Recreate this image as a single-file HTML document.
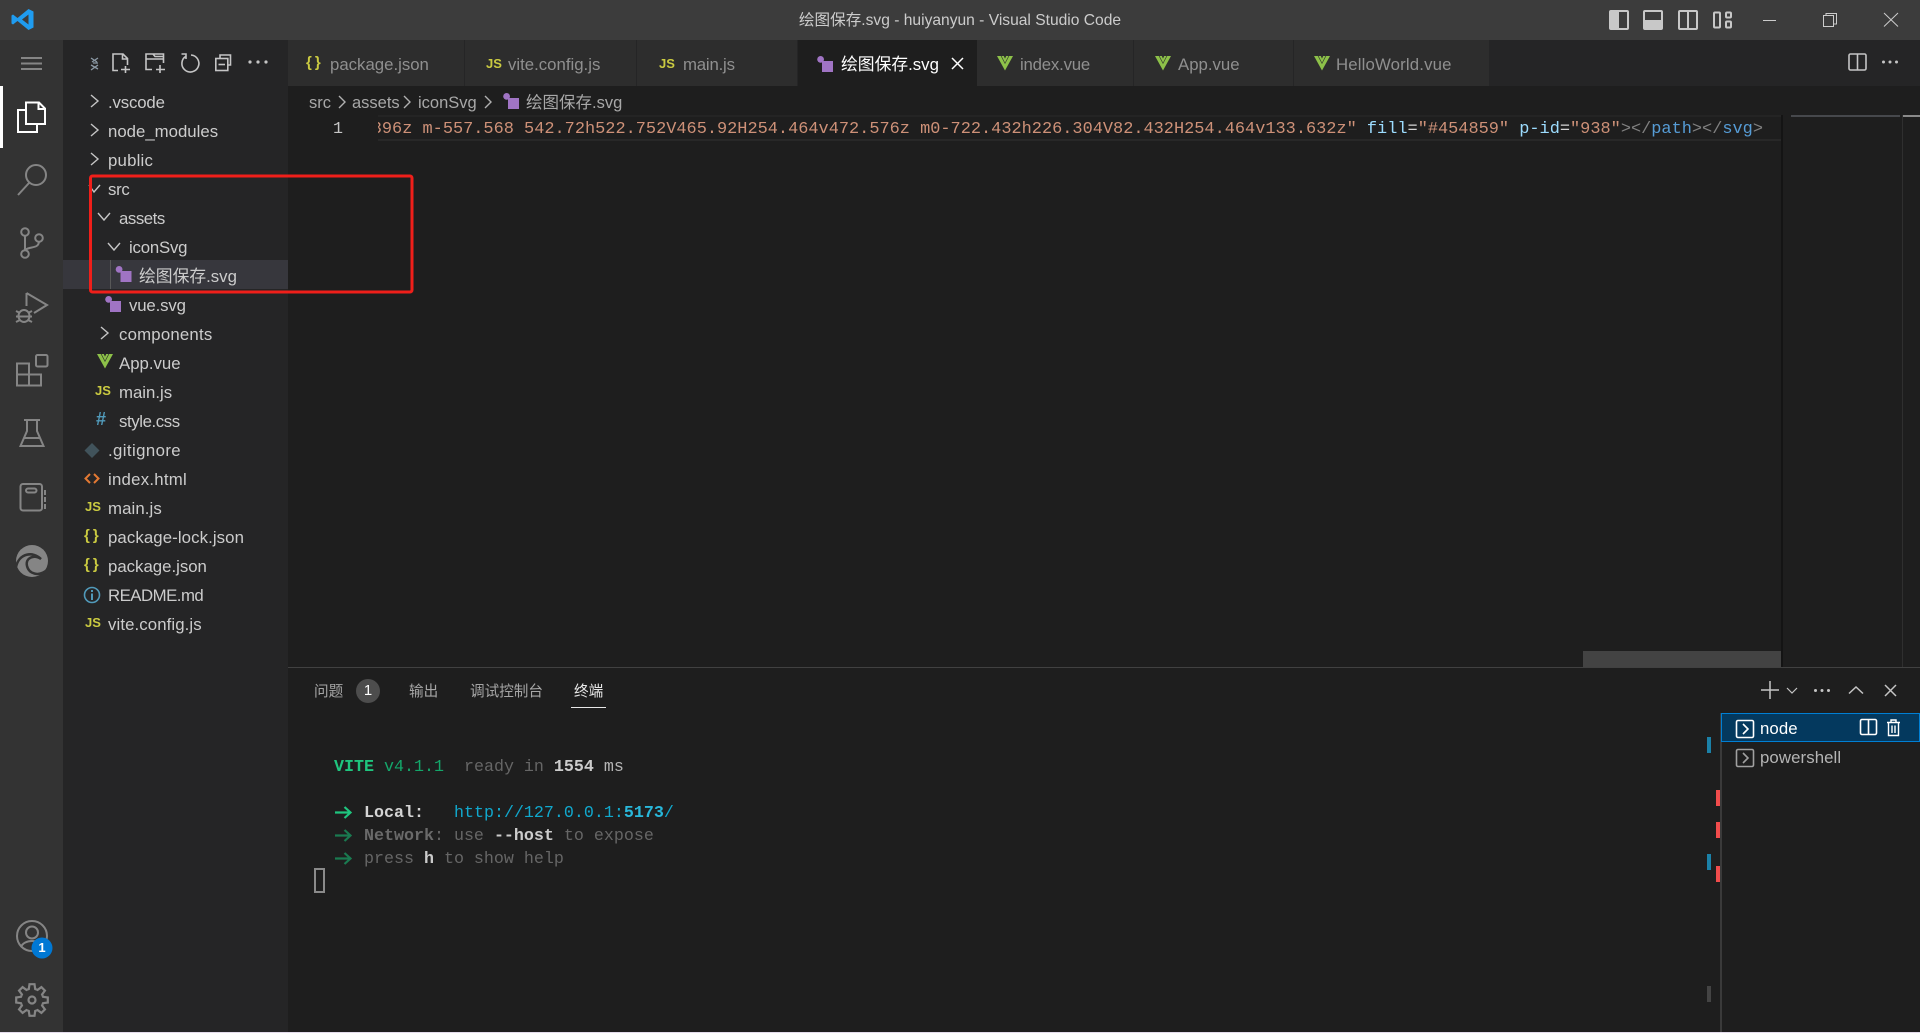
<!DOCTYPE html>
<html lang="zh"><head><meta charset="utf-8"><title>绘图保存.svg - huiyanyun - Visual Studio Code</title>
<style>
html,body{margin:0;padding:0;background:#1e1e1e}
#a{position:relative;width:1920px;height:1033px;overflow:hidden;background:#1e1e1e;font-family:"Liberation Sans","Noto Sans CJK SC",sans-serif;color:#ccc}
#a div,#a span.t{position:absolute;white-space:nowrap}
.b{position:absolute}
.r{font-size:16.8px;line-height:29px;height:29px;color:#ccc}
.tb{top:40px;height:46px;background:#2d2d2d;border-right:1px solid #252526;box-sizing:border-box}
.tt{top:51px;font-size:16.8px;line-height:28px;color:#8f8f8f}
.bc{top:89px;font-size:16.5px;line-height:28px;color:#a8a8a8}
.ic{font-weight:bold;color:#cbcb41;font-size:13px;line-height:16px;font-family:"Liberation Sans",sans-serif}
.br{font-size:15px;letter-spacing:3px;line-height:18px}
.pt{top:681.5px;font-size:14.6px;line-height:21px;color:#a6a6a6}
.mono{font-family:"Liberation Mono","Noto Sans CJK SC",monospace;font-size:16.67px}
pre{margin:0;font-family:inherit;font-size:inherit}
b{font-weight:bold}
</style></head><body><div id="a">
<div style="left:0;top:0;width:1920px;height:40px;background:#3c3c3c"></div>
<div style="left:0;top:40px;width:63px;height:993px;background:#333"></div>
<div style="left:63px;top:40px;width:225px;height:993px;background:#252526"></div>
<div style="left:288px;top:40px;width:1632px;height:46px;background:#252526"></div>

<div style="left:798px;top:10px;font-size:15.6px;line-height:22px;color:#ccc;width:324px;text-align:center">绘图保存.svg - huiyanyun - Visual Studio Code</div>

<!-- tabs -->
<div class="tb" style="left:288px;width:177px"></div>
<div class="tb" style="left:465px;width:172px"></div>
<div class="tb" style="left:637px;width:161px"></div>
<div class="tb" style="left:798px;width:179px;background:#1e1e1e;border:0"></div>
<div class="tb" style="left:977px;width:157px"></div>
<div class="tb" style="left:1134px;width:160px"></div>
<div class="tb" style="left:1294px;width:195px;border-right:0"></div>
<div class="ic br" style="left:306px;top:54px">{}</div>
<div class="tt" style="left:330px">package.json</div>
<div class="ic" style="left:486px;top:56px">JS</div>
<div class="tt" style="left:508px">vite.config.js</div>
<div class="ic" style="left:659px;top:56px">JS</div>
<div class="tt" style="left:683px;letter-spacing:-.2px">main.js</div>
<div class="tt" style="left:841px;color:#fff">绘图保存.svg</div>
<div class="tt" style="left:1020px;letter-spacing:-.2px">index.vue</div>
<div class="tt" style="left:1178px">App.vue</div>
<div class="tt" style="left:1336px;letter-spacing:.15px">HelloWorld.vue</div>

<!-- explorer rows -->
<div style="left:63px;top:260px;width:225px;height:29px;background:#37373d"></div>
<div style="left:110px;top:260px;width:1px;height:29px;background:#585858"></div>
<div class="r" style="left:108px;top:88px;letter-spacing:-.15px">.vscode</div>
<div class="r" style="left:108px;top:117px">node_modules</div>
<div class="r" style="left:108px;top:146px;letter-spacing:.2px">public</div>
<div class="r" style="left:108px;top:175px;letter-spacing:-.3px">src</div>
<div class="r" style="left:119px;top:204px;letter-spacing:-.45px">assets</div>
<div class="r" style="left:129px;top:233px;letter-spacing:-.2px">iconSvg</div>
<div class="r" style="left:139px;top:262px">绘图保存.svg</div>
<div class="r" style="left:129px;top:291px;letter-spacing:-.15px">vue.svg</div>
<div class="r" style="left:119px;top:320px;letter-spacing:.2px">components</div>
<div class="r" style="left:119px;top:349px">App.vue</div>
<div class="r" style="left:119px;top:378px">main.js</div>
<div class="r" style="left:119px;top:407px;letter-spacing:-.4px">style.css</div>
<div class="r" style="left:108px;top:436px;letter-spacing:.4px">.gitignore</div>
<div class="r" style="left:108px;top:465px;letter-spacing:.25px">index.html</div>
<div class="r" style="left:108px;top:494px;letter-spacing:.1px">main.js</div>
<div class="r" style="left:108px;top:523px;letter-spacing:.1px">package-lock.json</div>
<div class="r" style="left:108px;top:552px">package.json</div>
<div class="r" style="left:108px;top:581px;letter-spacing:-.5px">README.md</div>
<div class="r" style="left:108px;top:610px;letter-spacing:.1px">vite.config.js</div>
<div class="ic" style="left:95px;top:383px">JS</div>
<div class="ic" style="left:96px;top:411px;color:#519aba;font-size:18px">#</div>
<div class="ic" style="left:85px;top:499px">JS</div>
<div class="ic" style="left:85px;top:615px">JS</div>
<div class="ic br" style="left:84px;top:527px">{}</div>
<div class="ic br" style="left:84px;top:556px">{}</div>

<!-- breadcrumbs -->
<div class="bc" style="left:309px">src</div>
<div class="bc" style="left:352px">assets</div>
<div class="bc" style="left:418px">iconSvg</div>
<div class="bc" style="left:526px">绘图保存.svg</div>

<!-- editor -->
<div style="left:378px;top:115px;width:1405px;height:22px;border-top:2px solid #242424;border-bottom:2px solid #282828"></div>
<div class="mono" style="left:333px;top:119px;line-height:22px;height:22px;color:#c6c6c6">1</div>
<div class="mono" style="left:378px;top:119px;width:1385px;height:22px;overflow:hidden;font-size:16.93px"><span class="t" style="right:0;top:0;line-height:22px"><span style="color:#ce9178">396z m-557.568 542.72h522.752V465.92H254.464v472.576z m0-722.432h226.304V82.432H254.464v133.632z"</span> <span style="color:#9cdcfe">fill</span><span style="color:#d4d4d4">=</span><span style="color:#ce9178">"#454859"</span> <span style="color:#9cdcfe">p-id</span><span style="color:#d4d4d4">=</span><span style="color:#ce9178">"938"</span><span style="color:#808080">&gt;&lt;/</span><span style="color:#569cd6">path</span><span style="color:#808080">&gt;&lt;/</span><span style="color:#569cd6">svg</span><span style="color:#808080">&gt;</span></span></div>
<div style="left:1781px;top:115px;width:2px;height:552px;background:#141414"></div>
<div style="left:1902px;top:115px;width:1px;height:552px;background:#2f2f2f"></div>
<div style="left:1791px;top:115px;width:109px;height:2px;background:#46484c"></div>
<div style="left:1903px;top:115px;width:17px;height:2px;background:#8a8a8a"></div>
<div style="left:1583px;top:651px;width:198px;height:16px;background:#434343"></div>

<!-- panel -->
<div style="left:288px;top:667px;width:1632px;height:1px;background:#414141"></div>
<div class="pt" style="left:314px">问题</div>
<div style="left:356px;top:679px;width:24px;height:24px;border-radius:12px;background:#4d4d4d;color:#fff;font-size:15px;line-height:24px;text-align:center">1</div>
<div class="pt" style="left:409px">输出</div>
<div class="pt" style="left:470px">调试控制台</div>
<div class="pt" style="left:574px;color:#e7e7e7">终端</div>
<div style="left:571px;top:707px;width:35px;height:1px;background:#e7e7e7"></div>

<div class="mono" style="left:314px;top:756px;line-height:23px;color:#666"><pre>  <b style="color:#1fc57e">VITE</b> <span style="color:#14a66a">v4.1.1</span>  ready in <b style="color:#ccc">1554</b> <span style="color:#b5b5b5">ms</span>

     <b style="color:#d4d4d4">Local</b><b style="color:#d4d4d4">:</b>   <span style="color:#11a8cd">http://127.0.0.1:</span><b style="color:#29b8db">5173</b><span style="color:#11a8cd">/</span>
     <b style="color:#6a6a6a">Network</b>: use <b style="color:#ccc">--host</b> to expose
     press <b style="color:#ccc">h</b> to show help</pre></div>
<div style="left:314px;top:868px;width:7px;height:21px;border:2px solid #8a8a8a"></div>

<div style="left:1707px;top:737px;width:4px;height:16px;background:#1b81a8"></div>
<div style="left:1707px;top:854px;width:4px;height:16px;background:#1b81a8"></div>
<div style="left:1707px;top:986px;width:4px;height:16px;background:#444"></div>
<div style="left:1716px;top:790px;width:4px;height:16px;background:#f14c4c"></div>
<div style="left:1716px;top:822px;width:4px;height:16px;background:#f14c4c"></div>
<div style="left:1716px;top:866px;width:4px;height:16px;background:#f14c4c"></div>
<div style="left:1720px;top:713px;width:2px;height:320px;background:#3a3a3a"></div>
<div style="left:1721px;top:713px;width:199px;height:29px;box-sizing:border-box;background:#04395e;border:1px solid #007fd4"></div>
<div class="r" style="left:1760px;top:714px;color:#fff;letter-spacing:.1px">node</div>
<div class="r" style="left:1760px;top:743px;color:#b4b4b4;letter-spacing:.1px">powershell</div>

<!-- icons -->
<svg class="b" style="left:0;top:0" width="1920" height="1033" viewBox="0 0 1920 1033" fill="none" stroke-linecap="butt">
<defs>
<g id="sv"><circle cx="3.6" cy="3.4" r="3.4" fill="#a074c4"/><rect x="5" y="5" width="11" height="11" fill="#a074c4"/></g>
<g id="vu"><path d="M0 0H3.800L8 8 12.200 0H16L8 14.500Z" fill="#8dc149"/><path d="M4.500 0H6.800L8 2.600 9.200 0H11.500L8 6.800Z" fill="#8dc149"/></g>
<path id="ge" d="M-4.4 -10.6L-3.2 -11L-2.5 -15.8H2.5L3.2 -11L4.4 -10.6"/>
</defs>
<!-- logo -->
<path fill-rule="evenodd" fill="#1f9cf0" d="M28.5 9L33.5 11.5V27.5L28.5 30L17.5 21L13 24.5L11.5 23.5V15.5L13 14.5L17.5 18ZM28.5 14.5L22 19.5L28.5 24.5Z"/>
<!-- title controls -->
<g stroke="#c8c8c8" stroke-width="2"><rect x="1610" y="11" width="18" height="18" rx="1"/><rect x="1644" y="11" width="18" height="18" rx="1"/><rect x="1679" y="11" width="18" height="18" rx="1"/><path d="M1688 11V29"/><rect x="1714" y="12.5" width="6" height="15" rx="1"/><rect x="1726" y="12.5" width="5" height="5" rx="1"/><rect x="1726" y="21.5" width="5" height="6" rx="1"/></g>
<rect x="1611" y="12" width="8" height="16" fill="#c8c8c8"/><rect x="1645" y="20" width="16" height="8" fill="#c8c8c8"/>
<g stroke="#ccc" stroke-width="1"><path d="M1763 20.5H1776"/><rect x="1823.5" y="15.5" width="10" height="11"/><path d="M1826 15V13.5H1836.5V24H1834"/><path d="M1884 13L1898 26.5M1898 13L1884 26.5"/></g>
<!-- activity -->
<g stroke="#858585" stroke-width="2"><path d="M21 58H42M21 63.5H42M21 69H42"/>
<circle cx="36" cy="175" r="10"/><path d="M29 183L18 195"/>
<circle cx="25" cy="232" r="3.8"/><circle cx="25" cy="254" r="3.8"/><circle cx="39" cy="238" r="3.8"/><path d="M25 236V250M39 242C38 249 30 246 25 250"/>
<path d="M26.5 293V306M26.5 293L47 305L34 313"/><ellipse cx="24" cy="316" rx="5.5" ry="6"/><path d="M16 311L20 313M32 311L28 313M16 322L20 320M32 322L28 320M16 316.5H32"/>
<path d="M17 363.5H29V385.5H17ZM17 374.5H41V385.5H29"/><path d="M41 374.5V385.5"/><rect x="36" y="355" width="11.5" height="11.5" rx="1.5"/>
<path d="M24 420H40M27 420V431L20.5 446H43.5L37 431V420M23.5 438H40.5"/>
<rect x="20.5" y="484" width="21.5" height="26.5" rx="2.5"/><rect x="26" y="488.5" width="10.5" height="4" rx="2"/><path d="M45 490V495M45 497V502M45 504V509"/>
<circle cx="32" cy="936" r="15"/><circle cx="32" cy="932.5" r="6"/><path d="M21 947C24 939 40 939 43 947"/>
</g>
<path fill="#fff" d="M0 86H3V148H0Z"/>
<g stroke="#fff" stroke-width="2"><path d="M26 102.5H39L45 108.500V124H26ZM38.500 103V109H45M26 110H18V132H37V124"/></g>
<circle cx="32" cy="561" r="16" fill="#858585"/><path d="M16 567C19 553 33 551 41 559C34 554 25 558 27 566C29 574 39 577 47 570" stroke="#333" stroke-width="2.500"/>
<circle cx="42" cy="948" r="10.500" fill="#0078d4"/>
<g stroke="#858585" stroke-width="2.200" transform="translate(32 1000)"><use href="#ge"/><use href="#ge" transform="rotate(45)"/><use href="#ge" transform="rotate(90)"/><use href="#ge" transform="rotate(135)"/><use href="#ge" transform="rotate(180)"/><use href="#ge" transform="rotate(225)"/><use href="#ge" transform="rotate(270)"/><use href="#ge" transform="rotate(315)"/><circle r="3.500"/></g>
<!-- sidebar toolbar -->
<g stroke="#c5c5c5" stroke-width="1.600">
<path stroke="#8c9aa6" stroke-width="1.300" d="M91 58L97 62M98 58L92 62M93 63H98M91 65L98 69M98 65L91 70"/>
<path d="M118 70.500H113V54H123L127.500 58.500V65M122.500 54V59H127.500M125.500 66V73M121 69.500H130"/>
<path d="M152 69.500H146V54H163.500V63M146 59H163.500M153 54L155 56.500H163.500M160 65V73M156 69.500H165"/>
<path d="M186 56.200A8.500 8.500 0 1 0 191 55M181.500 54H186V59"/>
<path d="M220 58V55H230.500V65H228"/><rect x="215.800" y="58.500" width="12" height="12"/><path d="M218.500 64.500H225"/>
</g>
<g fill="#c5c5c5"><circle cx="250" cy="62" r="1.600"/><circle cx="258" cy="62" r="1.600"/><circle cx="266" cy="62" r="1.600"/><circle cx="1890" cy="62" r="1.500"/><circle cx="1896.500" cy="62" r="1.500"/><circle cx="1883.500" cy="62" r="1.500"/></g>
<!-- chevrons -->
<g stroke="#c5c5c5" stroke-width="1.400">
<path d="M91 95L98 101L91 107M91 124L98 130L91 136M91 153L98 159L91 165M89 185L94 192L100 185M98 213L104 220L110 213M108 243L114 250L120 243M101 327L108 333L101 339"/>
<path stroke="#b0b0b0" d="M339 96L345 102L339 108M404 96L410 102L404 108M485 96L491 102L485 108"/>
</g>
<!-- file icons -->
<use href="#sv" x="115.500" y="266"/><use href="#sv" x="105" y="296"/><use href="#sv" x="503" y="93"/><use href="#sv" x="817" y="56"/>
<use href="#vu" x="97" y="354"/><use href="#vu" x="997" y="56"/><use href="#vu" x="1155" y="56"/><use href="#vu" x="1314" y="56"/>
<path fill="#41535b" d="M92 443L99.500 450.500L92 458L84.500 450.500Z"/>
<path stroke="#e37933" stroke-width="2" d="M90 474L85.500 478.500L90 483M94 474L98.500 478.500L94 483"/>
<circle cx="92" cy="595" r="7.500" stroke="#519aba" stroke-width="1.600"/><path stroke="#519aba" stroke-width="2" d="M92 593.500V600M92 590V592"/>
<path stroke="#fff" stroke-width="1.500" d="M952 58L963 69M963 58L952 69"/>
<rect x="1849" y="54" width="17" height="16" rx="1.500" stroke="#c5c5c5" stroke-width="1.600"/><path stroke="#c5c5c5" stroke-width="1.600" d="M1857.500 54V70"/>
<!-- terminal arrows -->
<path stroke="#1fc57e" stroke-width="2.200" d="M335 812.500H350M344.500 807L350.500 812.500L344.500 818"/>
<path stroke="#1a7a50" stroke-width="2.200" d="M335 835.500H350M344.500 830L350.500 835.500L344.500 841M335 858.500H350M344.500 853L350.500 858.500L344.500 864"/>
<!-- panel actions -->
<g stroke="#c5c5c5" stroke-width="1.500"><path d="M1770 681V699M1761 690H1779"/><path d="M1787 688L1792 693L1797 688" stroke-width="1.200"/><path d="M1849 693.500L1856 687L1863 693.500"/><path d="M1885 685L1896 696M1896 685L1885 696"/></g>
<g fill="#c5c5c5"><circle cx="1815.500" cy="690.500" r="1.500"/><circle cx="1822" cy="690.500" r="1.500"/><circle cx="1828.500" cy="690.500" r="1.500"/></g>
<rect x="1736.500" y="720.500" width="17" height="17" rx="1.500" stroke="#fff" stroke-width="1.600"/><path stroke="#fff" stroke-width="1.600" d="M1743 724L1748 729L1743 734"/>
<rect x="1736.500" y="749.500" width="17" height="17" rx="1.500" stroke="#a0a0a0" stroke-width="1.600"/><path stroke="#a0a0a0" stroke-width="1.600" d="M1743 753L1748 758L1743 763"/>
<rect x="1860.500" y="719.500" width="16" height="15" rx="1.500" stroke="#fff" stroke-width="1.600"/><path stroke="#fff" stroke-width="1.600" d="M1868.500 719.500V734.500"/>
<path stroke="#fff" stroke-width="1.400" d="M1887 722.500H1900M1891 722V720H1896V722M1888.500 723V735.500H1898.500V723M1892 725.500V733M1895 725.500V733"/>
<!-- red annotation -->
<rect x="90.500" y="176" width="321.500" height="116" rx="2" stroke="#f01f1a" stroke-width="3"/>
</svg>
<div style="left:36px;top:939px;width:12px;text-align:center;color:#fff;font-size:13px;font-weight:bold;line-height:18px">1</div>
<div style="left:0;top:1032px;width:1920px;height:1px;background:#e4dcec"></div>
</div></body></html>
